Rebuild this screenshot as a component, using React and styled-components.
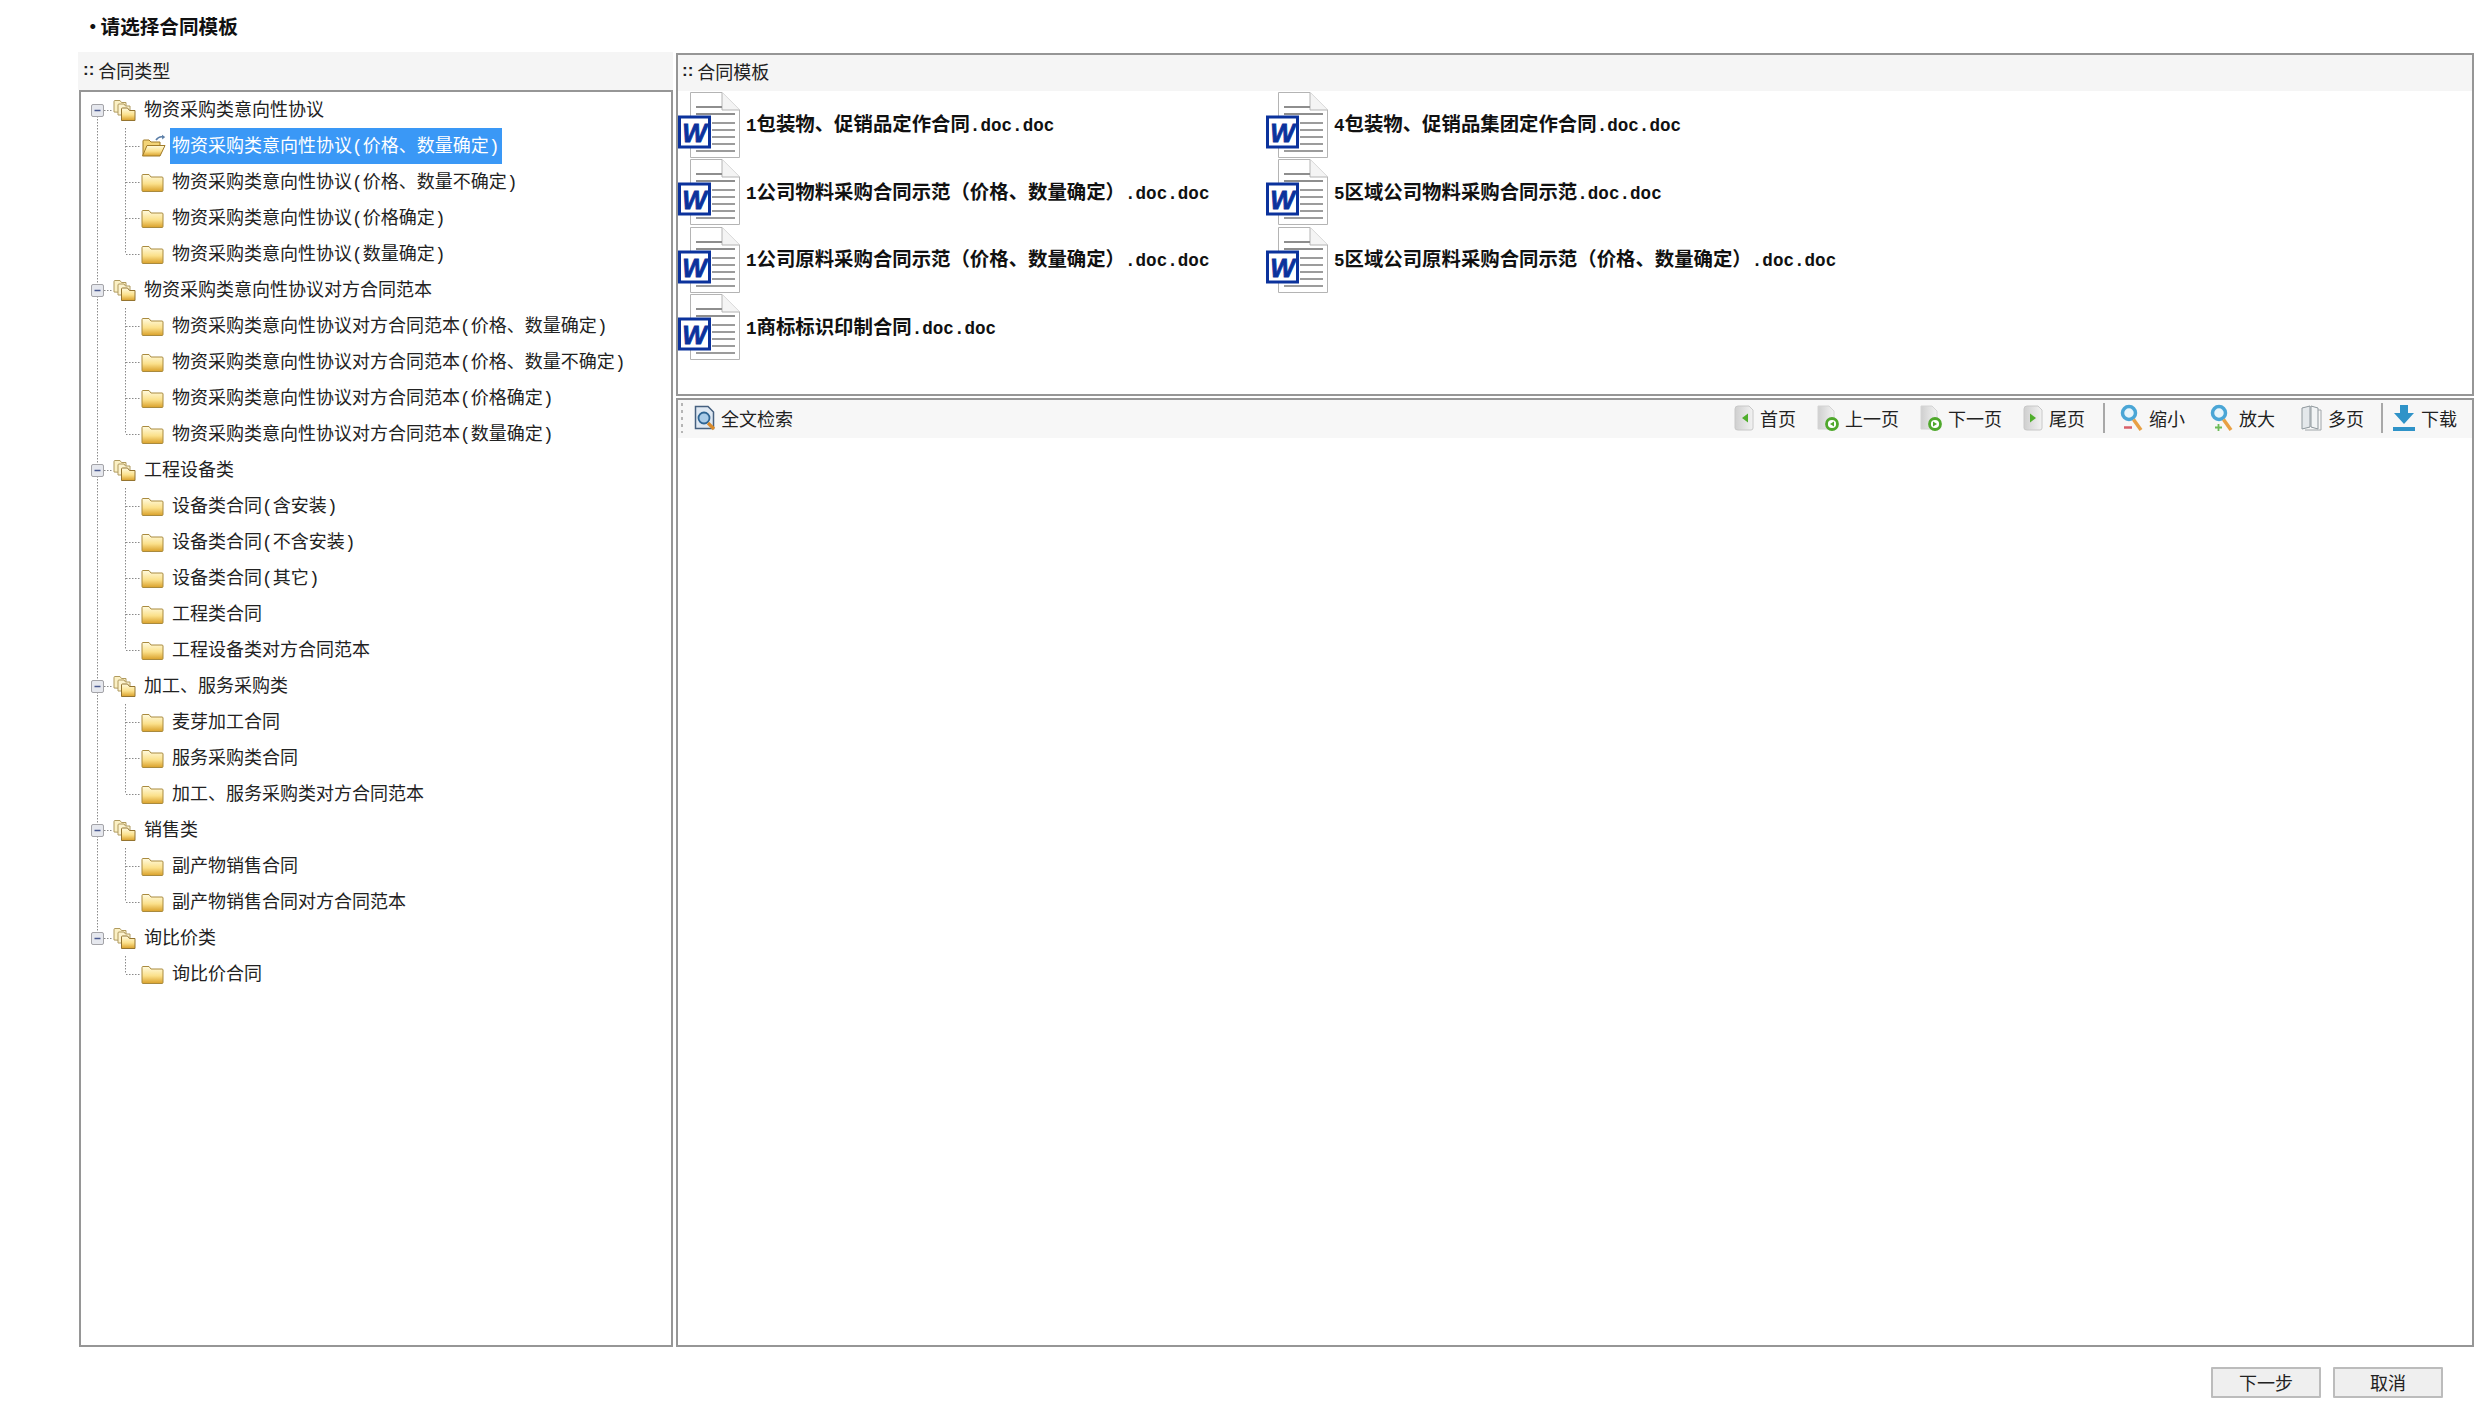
import React from 'react';
import styled, { createGlobalStyle } from 'styled-components';

const CJK = '"Liberation Mono", "Noto Sans CJK SC", sans-serif';

const tree = [
  { name: '物资采购类意向性协议', children: ['物资采购类意向性协议(价格、数量确定)', '物资采购类意向性协议(价格、数量不确定)', '物资采购类意向性协议(价格确定)', '物资采购类意向性协议(数量确定)'] },
  { name: '物资采购类意向性协议对方合同范本', children: ['物资采购类意向性协议对方合同范本(价格、数量确定)', '物资采购类意向性协议对方合同范本(价格、数量不确定)', '物资采购类意向性协议对方合同范本(价格确定)', '物资采购类意向性协议对方合同范本(数量确定)'] },
  { name: '工程设备类', children: ['设备类合同(含安装)', '设备类合同(不含安装)', '设备类合同(其它)', '工程类合同', '工程设备类对方合同范本'] },
  { name: '加工、服务采购类', children: ['麦芽加工合同', '服务采购类合同', '加工、服务采购类对方合同范本'] },
  { name: '销售类', children: ['副产物销售合同', '副产物销售合同对方合同范本'] },
  { name: '询比价类', children: ['询比价合同'] },
];

const docs = [
  '1包装物、促销品定作合同.doc.doc',
  '4包装物、促销品集团定作合同.doc.doc',
  '1公司物料采购合同示范（价格、数量确定）.doc.doc',
  '5区域公司物料采购合同示范.doc.doc',
  '1公司原料采购合同示范（价格、数量确定）.doc.doc',
  '5区域公司原料采购合同示范（价格、数量确定）.doc.doc',
  '1商标标识印制合同.doc.doc',
];

const GlobalStyle = createGlobalStyle`
  html, body {
    margin: 0;
    background: #fff;
    overflow: hidden;
  }
`;

const Page = styled.div`
  width: 2485px;
  height: 1405px;
  display: flex;
  flex-direction: column;
  font-family: ${CJK};
  font-size: 18px;
  color: #222;
`;

const Title = styled.div`
  height: 52px;
  box-sizing: border-box;
  padding: 5px 0 0 83px;
  font-family: "Noto Sans CJK SC", sans-serif;
  font-size: 19.6px;
  line-height: 42px;
  font-weight: 700;
  color: #111;
`;

const TitleDot = styled.span`
  margin-right: -2px;
`;

const Body = styled.div`
  flex: 1;
  display: grid;
  grid-template-columns: 595px 1fr;
  gap: 3px;
  padding: 0 11px 0 78px;
  min-height: 0;
`;

const LeftPanel = styled.div`
  display: flex;
  flex-direction: column;
  min-height: 0;
`;

const PanelHead = styled.div`
  height: ${p => p.$h}px;
  flex: none;
  box-sizing: border-box;
  display: flex;
  align-items: center;
  gap: 4px;
  padding: 0 0 ${p => p.$lift}px ${p => p.$pad}px;
  background: #f5f5f5;
`;

const Dots = styled.span`
  font-family: "Liberation Sans", sans-serif;
  font-weight: 700;
  font-size: 17px;
  color: #222;
`;

const TreeBox = styled.div`
  flex: 1;
  margin-left: 1px;
  border: 2px solid #969696;
  background: #fff;
`;

const Row = styled.div`
  height: 36px;
  display: flex;
  align-items: center;
  white-space: nowrap;
`;

const Label = styled.span`
  height: 36px;
  line-height: 38px;
  padding: 0 ${p => (p.$selected ? '2px' : '0')};
  margin-left: ${p => p.$left}px;
  background: ${p => (p.$selected ? '#3a98f6' : 'transparent')};
  color: ${p => (p.$selected ? '#fff' : '#222')};
`;

const RightPanel = styled.div`
  display: flex;
  flex-direction: column;
  gap: 2px;
  padding-top: 1px;
  min-height: 0;
`;

const TemplateBox = styled.div`
  height: 343px;
  flex: none;
  box-sizing: border-box;
  border: 2px solid #969696;
`;

const DocGrid = styled.div`
  display: grid;
  grid-template-columns: 588px 1fr;
  grid-auto-rows: 67.5px;
`;

const DocItem = styled.div`
  display: flex;
  align-items: center;
  gap: 6px;
  white-space: nowrap;
`;

const DocName = styled.span`
  padding-bottom: 4px;
  font-family: "Noto Sans CJK SC", serif;
  font-size: 19.4px;
  font-weight: 700;
  color: #111;
`;

const Latin = styled.span`
  font-family: "Liberation Mono", monospace;
  font-size: 17.6px;
`;

const ViewerBox = styled.div`
  flex: 1;
  min-height: 0;
  border: 2px solid #969696;
`;

const Toolbar = styled.div`
  height: 38px;
  box-sizing: border-box;
  display: flex;
  align-items: center;
  padding: 0 15px 2px 3px;
  background: #f7f7f7;
`;

const Grip = styled.span`
  width: 2px;
  height: 30px;
  margin-right: 11px;
  background: repeating-linear-gradient(to bottom, #b5b5b5 0 3px, transparent 3px 7px);
`;

const ToolGroup = styled.div`
  display: flex;
  align-items: center;
  gap: ${p => p.$gap}px;
  margin-left: ${p => (p.$push ? 'auto' : '0')};
`;

const ToolItem = styled.span`
  display: inline-flex;
  align-items: center;
  gap: ${p => p.$gap || 6}px;
  color: #222;
`;

const ToolDivider = styled.span`
  width: 2px;
  height: 30px;
  margin: 0 ${p => p.$right}px 0 ${p => p.$left}px;
  background: #a8a8a8;
`;

const Footer = styled.div`
  height: 58px;
  flex: none;
  box-sizing: border-box;
  padding: 20px 42px 0 0;
  display: flex;
  justify-content: flex-end;
  gap: 12px;
`;

const Button = styled.button`
  width: 110px;
  height: 31px;
  padding: 0 0 2px;
  border: 2px solid #bcbcbc;
  border-radius: 1px;
  background: #efefef;
  font-family: "Noto Sans CJK SC", sans-serif;
  font-size: 18px;
  line-height: 24px;
  color: #222;
`;

const SvgDefs = () => (
  <svg width="0" height="0" style={{ position: 'absolute' }}>
    <defs>
      <linearGradient id="folderFill" x1="0" y1="0" x2="0" y2="1">
        <stop offset="0" stopColor="#fffbe0" />
        <stop offset="0.55" stopColor="#fbe08a" />
        <stop offset="1" stopColor="#d9a02a" />
      </linearGradient>
      <linearGradient id="pageFill" x1="0" y1="0" x2="1" y2="0">
        <stop offset="0" stopColor="#cfcfcf" />
        <stop offset="1" stopColor="#f2f2f2" />
      </linearGradient>
    </defs>
  </svg>
);

const Folder = () => (
  <svg width="23" height="20" viewBox="0 0 23 20">
    <path d="M1 18.5V3.500q0-1 1-1h6l2 2.500h11q1 0 1 1v12.500q0 1-1 1H2q-1 0-1-1z" fill="url(#folderFill)" stroke="#a98a3e" strokeWidth="1" />
  </svg>
);

const FolderOpen = () => (
  <svg width="26" height="24" viewBox="0 0 26 24">
    <path d="M2 21V7q0-1 1-1h5l2 2h9v4" fill="#f3d477" stroke="#a07a28" strokeWidth="1" />
    <path d="M1.500 22 6 11.500h18L19 22z" fill="url(#folderFill)" stroke="#a07a28" strokeWidth="1" />
    <path d="M15 6q3-4 7-3" fill="none" stroke="#5c7fa8" strokeWidth="1.600" />
    <path d="M21 .8l3.200 2.200-3 2.400z" fill="#5c7fa8" />
  </svg>
);

const FolderStack = () => (
  <svg width="23" height="23" viewBox="0 0 23 23">
    <path d="M1 13V2.500q0-1 1-1h5l1.500 2H13v10z" fill="#fbf0c4" stroke="#b09a5e" strokeWidth="1" />
    <path d="M5 16V6q0-1 1-1h5l1.500 2H17v9z" fill="#fcf3cf" stroke="#b09a5e" strokeWidth="1" />
    <path d="M8.500 21.500V10q0-1 1-1h5l2 2.500h5.500v10z" fill="url(#folderFill)" stroke="#947430" strokeWidth="1" />
  </svg>
);

// gutter of a root row: expander box plus the dotted trunk
const RootLines = ({ first, last }) => (
  <svg width="32" height="36" viewBox="0 0 32 36">
    {!first && <path d="M16.500 0V12" stroke="#8a8a8a" strokeDasharray="1.5 1.5" />}
    {!last && <path d="M16.500 24V36" stroke="#8a8a8a" strokeDasharray="1.5 1.5" />}
    <path d="M23 18.500H32" stroke="#8a8a8a" strokeDasharray="1.5 1.5" />
    <rect x="10.500" y="12.500" width="12" height="12" rx="1.500" fill="#e6e8ee" stroke="#a4a4a8" />
    <path d="M13.500 18.500H19.500" stroke="#4a5a90" strokeWidth="1.500" />
  </svg>
);

// gutter of a child row: trunk plus the branch to the folder
const ChildLines = ({ trunk, end }) => (
  <svg width="60" height="36" viewBox="0 0 60 36">
    {trunk && <path d="M16.500 0V36" stroke="#8a8a8a" strokeDasharray="1.5 1.5" />}
    <path d={end ? 'M44.500 0V18' : 'M44.500 0V36'} stroke="#8a8a8a" strokeDasharray="1.5 1.5" />
    <path d="M45 18.500H60" stroke="#8a8a8a" strokeDasharray="1.5 1.5" />
  </svg>
);

const WordDoc = () => (
  <svg width="62" height="66" viewBox="0 0 62 66">
    <path d="M12.500 .5H44L61.500 18V65.500H12.500z" fill="#fff" stroke="#b4b4b4" />
    <path d="M44 .5V18H61.500" fill="#f4f4f4" stroke="#b4b4b4" />
    <path d="M18 15H44M18 22H57" stroke="#8e8e8e" strokeWidth="2" />
    <path d="M34 31H57M34 38H57M34 45H57M34 52H57M18 59H57" stroke="#9c9c9c" strokeWidth="2" />
    <rect x="1.500" y="25" width="30" height="30" fill="#fff" stroke="#0b329c" strokeWidth="3" />
    <text x="16.500" y="49.500" textAnchor="middle" fontFamily="Liberation Sans" fontStyle="italic" fontWeight="700" fontSize="26" fill="#0b329c" stroke="#0b329c" strokeWidth="0.8">W</text>
  </svg>
);

const SearchDoc = () => (
  <svg width="22" height="26" viewBox="0 0 22 26">
    <path d="M1.500 1.500H14L19.500 7V23.500H1.500z" fill="#dfe8f2" stroke="#46607f" strokeWidth="1.500" />
    <circle cx="10" cy="13" r="5.500" fill="#a9cbe8" stroke="#2f6594" strokeWidth="1.800" />
    <path d="M14 18l6 6" stroke="#d98a2b" strokeWidth="3.200" />
  </svg>
);

const PageArrow = ({ dir }) => (
  <svg width="20" height="26" viewBox="0 0 20 26">
    <path d="M4 1H15L19 5V23Q19 25 17 25H4Q1 25 1 23V4Q1 1 4 1z" fill="url(#pageFill)" stroke="#c8c8c8" />
    <path d={dir === 'left' ? 'M14 8.500V17.500L8 13z' : 'M7 8.500V17.500L13 13z'} fill="#4fae2c" />
  </svg>
);

const PageCircle = ({ dir }) => (
  <svg width="22" height="26" viewBox="0 0 22 26">
    <path d="M1 1H12L17 6V24H1z" fill="url(#pageFill)" stroke="#d4d4d4" />
    <circle cx="15" cy="19" r="5.500" fill="#fff" stroke="#4fa82c" strokeWidth="2.800" />
    <path d={dir === 'left' ? 'M17 16.500V21.500L13 19z' : 'M13 16.500V21.500L17 19z'} fill="#4fa82c" />
  </svg>
);

const Magnifier = ({ plus }) => (
  <svg width="23" height="28" viewBox="0 0 23 28">
    <circle cx="9" cy="9" r="6.500" fill="#e8f5fb" stroke="#4aa6d6" strokeWidth="3.500" />
    <path d="M13.500 15.500L21 26" stroke="#e8a044" strokeWidth="3.500" />
    {plus
      ? <path d="M8.500 20V27M5 23.500H12" stroke="#6dbb57" strokeWidth="1.800" />
      : <path d="M4 23.500H12" stroke="#d9606a" strokeWidth="2.500" />}
  </svg>
);

const Book = () => (
  <svg width="22" height="26" viewBox="0 0 22 26">
    <path d="M2 3L10 1V22L2 24z" fill="#e4e8eb" stroke="#8e979c" />
    <path d="M11 1L18 3V24L11 22z" fill="#f2f4f5" stroke="#8e979c" />
    <path d="M18 5H21V25H5" fill="none" stroke="#a0a6aa" />
  </svg>
);

const DownloadIcon = () => (
  <svg width="22" height="28" viewBox="0 0 22 28">
    <path d="M7 1H15V9H21L11 20 1 9H7z" fill="#2f93c8" />
    <rect x="0" y="23" width="22" height="4" fill="#2f93c8" />
  </svg>
);

const renderDocName = (text) =>
  text.split(/([0-9.a-z]+)/).map((part, i) =>
    /^[0-9.a-z]+$/.test(part) ? <Latin key={i}>{part}</Latin> : part
  );

const App = () => (
  <Page>
    <GlobalStyle />
    <SvgDefs />
    <Title><TitleDot>·</TitleDot>请选择合同模板</Title>
    <Body>
      <LeftPanel>
        <PanelHead $h={38} $pad={5} $lift={3}>
          <Dots>::</Dots>
          合同类型
        </PanelHead>
        <TreeBox>
          {tree.map((group, g) => {
            const lastGroup = g === tree.length - 1;
            return (
              <React.Fragment key={group.name}>
                <Row>
                  <RootLines first={g === 0} last={lastGroup} />
                  <FolderStack />
                  <Label $left={8}>{group.name}</Label>
                </Row>
                {group.children.map((child, c) => {
                  const selected = g === 0 && c === 0;
                  return (
                    <Row key={child}>
                      <ChildLines trunk={!lastGroup} end={c === group.children.length - 1} />
                      {selected ? <FolderOpen /> : <Folder />}
                      <Label $left={selected ? 3 : 8} $selected={selected}>{child}</Label>
                    </Row>
                  );
                })}
              </React.Fragment>
            );
          })}
        </TreeBox>
      </LeftPanel>
      <RightPanel>
        <TemplateBox>
          <PanelHead $h={36} $pad={4} $lift={4}>
            <Dots>::</Dots>
            合同模板
          </PanelHead>
          <DocGrid>
            {docs.map(doc => (
              <DocItem key={doc}>
                <WordDoc />
                <DocName>{renderDocName(doc)}</DocName>
              </DocItem>
            ))}
          </DocGrid>
        </TemplateBox>
        <ViewerBox>
          <Toolbar>
            <Grip />
            <ToolItem $gap={5}><SearchDoc />全文检索</ToolItem>
            <ToolGroup $push $gap={21}>
              <ToolItem><PageArrow dir="left" />首页</ToolItem>
              <ToolItem><PageCircle dir="left" />上一页</ToolItem>
              <ToolItem><PageCircle dir="right" />下一页</ToolItem>
              <ToolItem><PageArrow dir="right" />尾页</ToolItem>
            </ToolGroup>
            <ToolDivider $left={18} $right={15} />
            <ToolGroup $gap={25}>
              <ToolItem><Magnifier />缩小</ToolItem>
              <ToolItem><Magnifier plus />放大</ToolItem>
              <ToolItem><Book />多页</ToolItem>
            </ToolGroup>
            <ToolDivider $left={17} $right={10} />
            <ToolItem><DownloadIcon />下载</ToolItem>
          </Toolbar>
        </ViewerBox>
      </RightPanel>
    </Body>
    <Footer>
      <Button>下一步</Button>
      <Button>取消</Button>
    </Footer>
  </Page>
);

export default App;
